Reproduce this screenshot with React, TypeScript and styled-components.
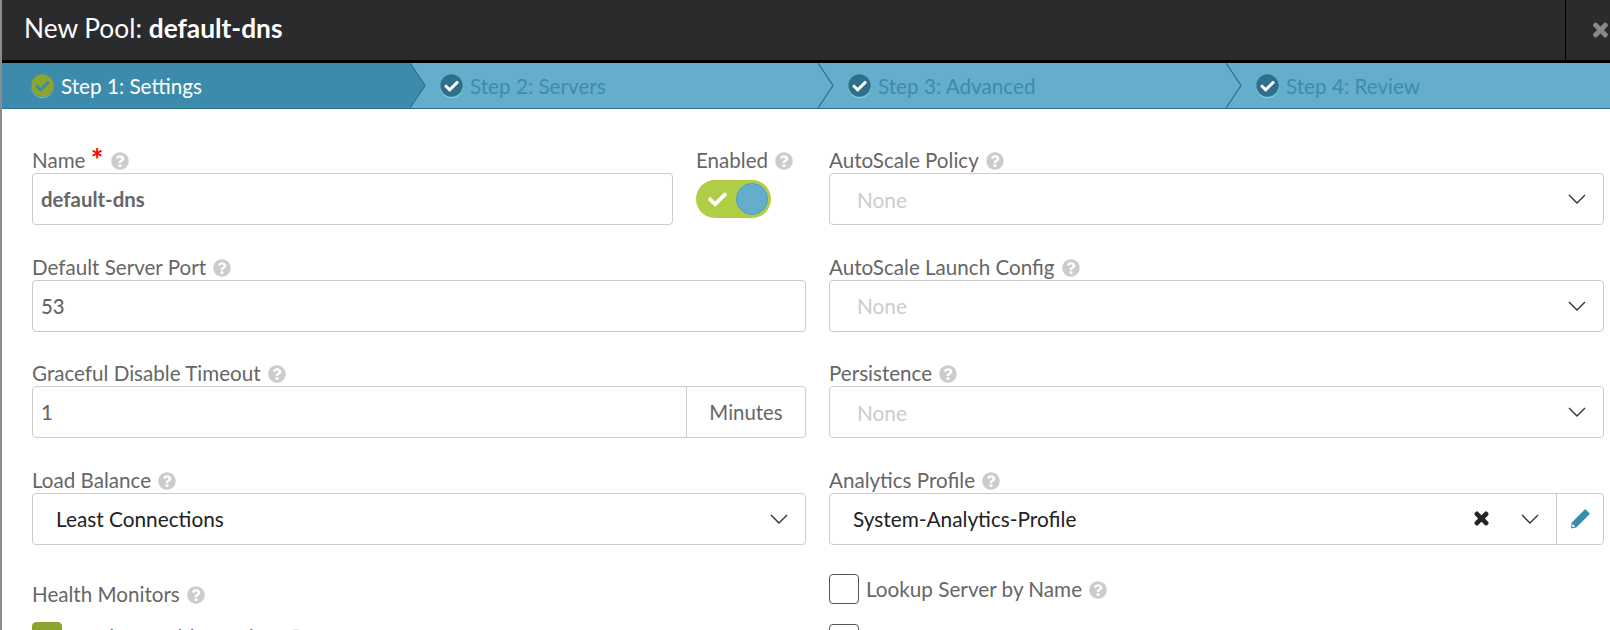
import React from "react";
import styled, { createGlobalStyle } from "styled-components";
import { FaCheck, FaCheckCircle, FaQuestionCircle, FaTimes } from "react-icons/fa";

const GlobalStyle = createGlobalStyle`
  html, body {
    margin: 0;
    padding: 0;
    background: #fff;
    overflow: hidden;
  }
  body {
    font-family: Lato, "Open Sans", sans-serif;
  }
`;

function Help() {
  return (
    <HelpIcon>
      <FaQuestionCircle />
    </HelpIcon>
  );
}

function Chevron() {
  return (
    <ChevronSvg width="18" height="10" viewBox="0 0 18 10">
      <polyline points="1,1 9,9 17,1" fill="none" stroke="#333" strokeWidth="1.4" />
    </ChevronSvg>
  );
}

function Pencil() {
  return (
    <svg width="21" height="21" viewBox="0 0 20 20">
      <polygon points="14.5,1 19,5.5 6,18.5 1,19.5 1.5,14" fill="#3d8bac" />
      <polygon points="2.6,15.2 4.9,17.5 2,18.2" fill="#fff" />
    </svg>
  );
}

const steps = ["Step 1: Settings", "Step 2: Servers", "Step 3: Advanced", "Step 4: Review"];

function App() {
  return (
    <Page>
      <GlobalStyle />
      <Header>
        <Title>
          New Pool: <b>default-dns</b>
        </Title>
        <CloseButton>
          <FaTimes />
        </CloseButton>
      </Header>
      <StepBar>
        {steps.map((step, i) => (
          <Step key={step} $active={i === 0}>
            <StepCheck $active={i === 0}>
              <FaCheckCircle />
            </StepCheck>
            {step}
            {i < 3 && (
              <StepArrow width="16" height="45" viewBox="0 0 16 45">
                <polygon points="0,0 15,22.5 0,45" fill={i === 0 ? "#3d8bac" : "#65aecb"} />
                <polyline points="0,0 15,22.5 0,45" fill="none" stroke="#2e708a" strokeWidth="1.2" />
              </StepArrow>
            )}
          </Step>
        ))}
      </StepBar>
      <Form>
        <Column>
          <NameRow>
            <NameField>
              <Label>
                Name <Required>*</Required> <Help />
              </Label>
              <TextBox $bold>default-dns</TextBox>
            </NameField>
            <ToggleField>
              <Label>
                Enabled <Help />
              </Label>
              <Toggle>
                <FaCheck />
                <Knob />
              </Toggle>
            </ToggleField>
          </NameRow>
          <Field>
            <Label>
              Default Server Port <Help />
            </Label>
            <TextBox>53</TextBox>
          </Field>
          <Field>
            <Label>
              Graceful Disable Timeout <Help />
            </Label>
            <TextBox>
              1<Addon>Minutes</Addon>
            </TextBox>
          </Field>
          <Field>
            <Label>
              Load Balance <Help />
            </Label>
            <SelectBox>
              <SelectValue>Least Connections</SelectValue>
              <Chevron />
            </SelectBox>
          </Field>
          <MonitorField>
            <Label>
              Health Monitors <Help />
            </Label>
            <MonitorRow>
              <CheckBox $checked />
              <CheckLabel>
                Passive Health Monitor <Help />
              </CheckLabel>
            </MonitorRow>
          </MonitorField>
        </Column>
        <Column>
          <Field>
            <Label>
              AutoScale Policy <Help />
            </Label>
            <SelectBox>
              <SelectValue $placeholder>None</SelectValue>
              <Chevron />
            </SelectBox>
          </Field>
          <Field>
            <Label>
              AutoScale Launch Config <Help />
            </Label>
            <SelectBox>
              <SelectValue $placeholder>None</SelectValue>
              <Chevron />
            </SelectBox>
          </Field>
          <Field>
            <Label>
              Persistence <Help />
            </Label>
            <SelectBox>
              <SelectValue $placeholder>None</SelectValue>
              <Chevron />
            </SelectBox>
          </Field>
          <Field>
            <Label>
              Analytics Profile <Help />
            </Label>
            <SelectBox>
              <SelectValue>System-Analytics-Profile</SelectValue>
              <ClearIcon>
                <FaTimes />
              </ClearIcon>
              <Chevron />
              <EditButton>
                <Pencil />
              </EditButton>
            </SelectBox>
          </Field>
          <CheckList>
            <CheckRow>
              <CheckBox />
              <CheckLabel>
                Lookup Server by Name <Help />
              </CheckLabel>
            </CheckRow>
            <CheckRow>
              <CheckBox />
              <CheckLabel>
                Rewrite Host Header to Server Name <Help />
              </CheckLabel>
            </CheckRow>
          </CheckList>
        </Column>
      </Form>
    </Page>
  );
}

export default App;

const Page = styled.div`
  height: 630px;
  overflow: hidden;
  background: #fff;
  border-left: 2px solid #8c8c8c;
  box-sizing: border-box;
`;

const Header = styled.div`
  height: 60px;
  background: #2b2b2d;
  border-bottom: 3px solid #000;
  display: flex;
  align-items: stretch;
  justify-content: space-between;
  margin-left: -2px;
`;

const Title = styled.div`
  padding-left: 24px;
  font-size: 26.3px;
  line-height: 56px;
  color: #fff;
  b {
    font-weight: 700;
  }
`;

const CloseButton = styled.div`
  width: 45px;
  border-left: 1px solid #000;
  box-sizing: border-box;
  color: #8a8a8a;
  font-size: 20px;
  display: flex;
  align-items: center;
  padding-left: 25px;
  overflow: hidden;
  flex-shrink: 0;
  svg {
    stroke: currentColor;
    stroke-width: 30px;
  }
`;

const StepBar = styled.div`
  height: 46px;
  box-sizing: border-box;
  background: #65aecb;
  border-bottom: 1px solid #2e708a;
  display: flex;
  overflow: hidden;
`;

const Step = styled.div<{ $active?: boolean }>`
  position: relative;
  flex: 0 0 408px;
  box-sizing: border-box;
  padding-left: ${(p) => (p.$active ? "29px" : "30px")};
  display: flex;
  align-items: center;
  gap: 7px;
  font-size: 20.7px;
  background: ${(p) => (p.$active ? "#3d8bac" : "transparent")};
  color: ${(p) => (p.$active ? "#fff" : "#3d8bac")};
`;

const StepCheck = styled.span<{ $active?: boolean }>`
  display: flex;
  font-size: 23px;
  color: ${(p) => (p.$active ? "#8ba52f" : "#2e708a")};
  background: radial-gradient(circle, ${(p) => (p.$active ? "#3d8bac" : "#fff")} 55%, transparent 58%);
  border-radius: 50%;
  box-shadow: 0 1px 0 rgba(255, 255, 255, 0.35);
`;

const StepArrow = styled.svg`
  position: absolute;
  left: 100%;
  top: 0;
  z-index: 1;
`;

const Form = styled.div`
  display: grid;
  grid-template-columns: 774px 775px;
  column-gap: 23px;
  padding: 40px 0 0 30px;
`;

const Column = styled.div`
  display: flex;
  flex-direction: column;
`;

const Field = styled.div`
  height: 106.67px;
`;

const NameRow = styled.div`
  display: flex;
  gap: 23px;
`;

const NameField = styled(Field)`
  flex: 1;
  min-width: 0;
`;

const ToggleField = styled(Field)`
  flex: 0 0 110px;
`;

const MonitorField = styled.div`
  padding-top: 7px;
`;

const Label = styled.div`
  height: 24px;
  font-size: 20.6px;
  line-height: 22px;
  color: #666;
  white-space: nowrap;
`;

const Required = styled.span`
  color: #f00;
  font-weight: 700;
  font-size: 30px;
  line-height: 0;
  vertical-align: -3px;
`;

const HelpIcon = styled.span`
  display: inline-flex;
  vertical-align: -2px;
  margin-left: 2px;
  font-size: 18px;
  color: #cccccc;
`;

const TextBox = styled.div<{ $bold?: boolean }>`
  position: relative;
  height: 52px;
  box-sizing: border-box;
  border: 1px solid #ccc;
  border-radius: 4px;
  padding-left: 8px;
  display: flex;
  align-items: center;
  font-size: 20.4px;
  font-weight: ${(p) => (p.$bold ? 700 : 500)};
  color: #666;
`;

const Addon = styled.div`
  margin-left: auto;
  height: 100%;
  width: 119px;
  box-sizing: border-box;
  border-left: 1px solid #ccc;
  display: flex;
  align-items: center;
  justify-content: center;
  font-weight: 400;
`;

const SelectBox = styled.div`
  height: 52px;
  box-sizing: border-box;
  border: 1px solid #ccc;
  border-radius: 4px;
  padding-left: 23px;
  padding-right: 17px;
  display: flex;
  align-items: center;
  font-size: 20.8px;
`;

const SelectValue = styled.div<{ $placeholder?: boolean }>`
  flex: 1;
  color: ${(p) => (p.$placeholder ? "#ccc" : "#222")};
  padding-left: ${(p) => (p.$placeholder ? "4px" : "0")};
`;

const ChevronSvg = styled.svg`
  flex-shrink: 0;
`;

const ClearIcon = styled.span`
  display: flex;
  font-size: 19px;
  color: #222;
  margin-right: 30px;
  svg {
    stroke: currentColor;
    stroke-width: 30px;
  }
`;

const EditButton = styled.div`
  align-self: stretch;
  width: 47px;
  box-sizing: border-box;
  margin-left: 17px;
  margin-right: -17px;
  border-left: 1px solid #ccc;
  display: flex;
  align-items: center;
  justify-content: center;
`;

const CheckList = styled.div`
  display: flex;
  flex-direction: column;
  gap: 20px;
  margin-top: -2px;
`;

const CheckRow = styled.div`
  display: flex;
  align-items: center;
  gap: 7px;
  height: 30px;
`;

const MonitorRow = styled(CheckRow)`
  margin-top: 15px;
`;

const CheckBox = styled.div<{ $checked?: boolean }>`
  width: 30px;
  height: 30px;
  box-sizing: border-box;
  border-radius: 4px;
  border: 1px solid ${(p) => (p.$checked ? "#8ba52f" : "#555")};
  background: ${(p) => (p.$checked ? "#8ba52f" : "#fff")};
`;

const CheckLabel = styled.div`
  font-size: 20.7px;
  color: #666;
  white-space: nowrap;
`;

const Knob = styled.span`
  position: absolute;
  right: 3px;
  top: 3px;
  width: 32px;
  height: 32px;
  box-sizing: border-box;
  border-radius: 50%;
  background: #65aecb;
  border: 1px solid #4a9fcf;
`;

const Toggle = styled.div`
  position: relative;
  width: 75px;
  height: 38px;
  margin-top: 7px;
  border-radius: 19px;
  background: #b0cd46;
  color: #fff;
  font-size: 19px;
  display: flex;
  align-items: center;
  padding-left: 12px;
  box-sizing: border-box;
`;
